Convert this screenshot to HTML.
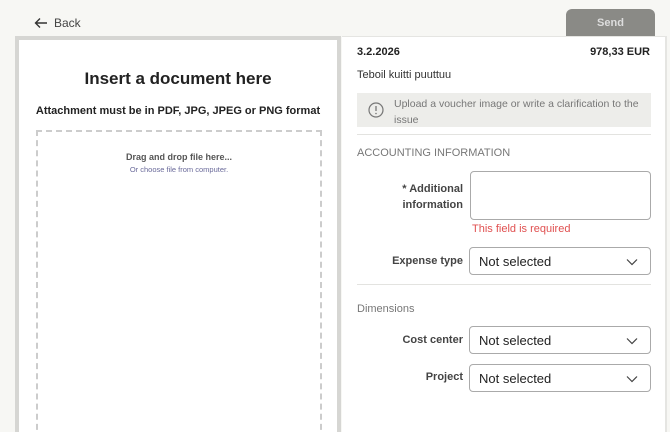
<!DOCTYPE html>
<html><head><style>
*{box-sizing:border-box;margin:0;padding:0}
html,body{width:670px;height:432px;overflow:hidden}
body{background:#f7f7f4;font-family:"Liberation Sans",sans-serif;position:relative;color:#222}
.a{position:absolute}
.sel{position:absolute;left:469px;width:182px;height:28px;border:1px solid #aaa;border-radius:4px;background:#fff;font-size:13px;padding:6px 9px;color:#222}
.sel svg{position:absolute;right:12px;top:10px}
.lbl{position:absolute;right:207px;font-size:11px;font-weight:bold;color:#444;text-align:right}
</style></head><body>
<svg class="a" style="left:34px;top:17px" width="14" height="12" viewBox="0 0 14 12"><path d="M13 6H2M6 1.5L1.5 6 6 10.5" stroke="#333" stroke-width="1.4" fill="none"/></svg>
<div class="a" style="left:54px;top:16px;font-size:12px;color:#444">Back</div>
<div class="a" style="left:566px;top:9px;width:89px;height:28px;background:#8a8a86;border-radius:6px 6px 0 0;color:#ddd;font-size:11px;font-weight:bold;text-align:center;line-height:28px">Send</div>
<div class="a" style="left:15px;top:36px;width:326px;height:400px;background:#fff;border:4px solid #d6d6d3;border-bottom:none"></div>
<div class="a" style="left:15px;top:69px;width:326px;text-align:center;font-size:17px;font-weight:bold;color:#222">Insert a document here</div>
<div class="a" style="left:15px;top:105px;width:326px;text-align:center;font-size:11px;font-weight:bold;color:#222">Attachment must be in PDF, JPG, JPEG or PNG format</div>
<div class="a" style="left:36px;top:130px;width:286px;height:310px;border:2px dashed #ccc"></div>
<div class="a" style="left:36px;top:152px;width:286px;text-align:center;font-size:9px;font-weight:bold;color:#555">Drag and drop file here...</div>
<div class="a" style="left:36px;top:165px;width:286px;text-align:center;font-size:7.5px;color:#6a6a9a">Or choose file from computer.</div>
<div class="a" style="left:342px;top:36px;width:325px;height:400px;background:#fff;border-right:2px solid #e5e5e2;border-top:1px solid #e5e5e2"></div>
<div class="a" style="left:357px;top:46px;font-size:11px;font-weight:bold">3.2.2026</div>
<div class="a" style="right:20px;top:46px;font-size:11px;font-weight:bold">978,33 EUR</div>
<div class="a" style="left:357px;top:69px;font-size:11px;color:#333">Teboil kuitti puuttuu</div>
<div class="a" style="left:357px;top:93px;width:294px;height:34px;background:#ededea"></div>
<svg class="a" style="left:368px;top:102px" width="16" height="16" viewBox="0 0 16 16"><circle cx="8" cy="8" r="7" stroke="#777" stroke-width="1.2" fill="none"/><path d="M8 4v5" stroke="#777" stroke-width="1.3"/><circle cx="8" cy="11.5" r=".8" fill="#777"/></svg>
<div class="a" style="left:394px;top:96px;width:256px;font-size:10.5px;line-height:16px;color:#777">Upload a voucher image or write a clarification to the issue</div>
<div class="a" style="left:357px;top:134px;width:294px;height:1px;background:#e3e3e0"></div>
<div class="a" style="left:357px;top:147px;font-size:11px;color:#777">ACCOUNTING INFORMATION</div>
<div class="lbl" style="top:181px;line-height:16px">* Additional<br>information</div>
<div class="a" style="left:470px;top:171px;width:181px;height:49px;border:1px solid #aaa;border-radius:4px"></div>
<div class="a" style="left:472px;top:223px;font-size:11px;color:#e05050">This field is required</div>
<div class="lbl" style="top:255px">Expense type</div>
<div class="sel" style="top:247px">Not selected<svg width="12" height="8"><path d="M1 1.5l5 5 5-5" stroke="#444" stroke-width="1.2" fill="none"/></svg></div>
<div class="a" style="left:357px;top:284px;width:294px;height:1px;background:#e3e3e0"></div>
<div class="a" style="left:357px;top:303px;font-size:11px;color:#777">Dimensions</div>
<div class="lbl" style="top:334px">Cost center</div>
<div class="sel" style="top:326px">Not selected<svg width="12" height="8"><path d="M1 1.5l5 5 5-5" stroke="#444" stroke-width="1.2" fill="none"/></svg></div>
<div class="lbl" style="top:371px">Project</div>
<div class="sel" style="top:364px">Not selected<svg width="12" height="8"><path d="M1 1.5l5 5 5-5" stroke="#444" stroke-width="1.2" fill="none"/></svg></div>
</body></html>
